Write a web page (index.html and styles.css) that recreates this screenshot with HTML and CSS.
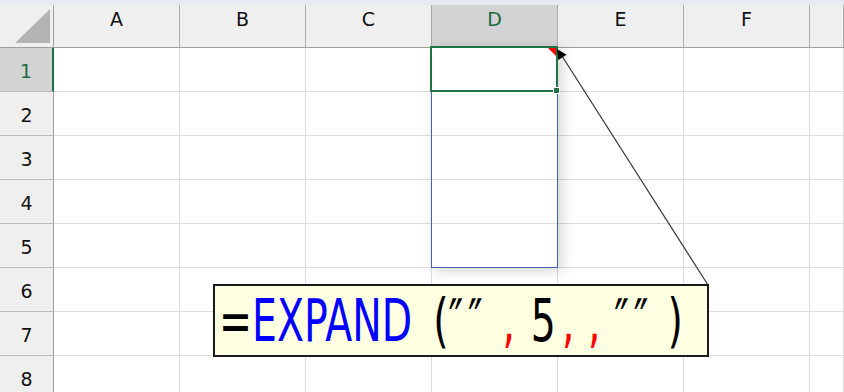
FILE: index.html
```html
<!DOCTYPE html>
<html lang="ja">
<head>
    <meta charset="UTF-8">
    <title>EXPAND</title>
    <link rel="stylesheet" href="styles.css">
</head>
<body>

<div class="page">
    <div class="topbar"></div>

    <div class="sheet">
        <!-- Kepala kolom -->
        <div class="row head">
            <div class="corner"><span class="corner-tri"></span></div>
            <div class="col-h">A</div>
            <div class="col-h">B</div>
            <div class="col-h">C</div>
            <div class="col-h sel">D</div>
            <div class="col-h">E</div>
            <div class="col-h">F</div>
            <div class="col-h"></div>
        </div>

        <div class="row">
            <div class="row-h sel">1</div>
            <div class="cell"></div><div class="cell"></div><div class="cell"></div><div class="cell"></div>
            <div class="cell"></div><div class="cell"></div><div class="cell"></div>
        </div>
        <div class="row">
            <div class="row-h">2</div>
            <div class="cell"></div><div class="cell"></div><div class="cell"></div><div class="cell"></div>
            <div class="cell"></div><div class="cell"></div><div class="cell"></div>
        </div>
        <div class="row">
            <div class="row-h">3</div>
            <div class="cell"></div><div class="cell"></div><div class="cell"></div><div class="cell"></div>
            <div class="cell"></div><div class="cell"></div><div class="cell"></div>
        </div>
        <div class="row">
            <div class="row-h">4</div>
            <div class="cell"></div><div class="cell"></div><div class="cell"></div><div class="cell"></div>
            <div class="cell"></div><div class="cell"></div><div class="cell"></div>
        </div>
        <div class="row">
            <div class="row-h">5</div>
            <div class="cell"></div><div class="cell"></div><div class="cell"></div><div class="cell"></div>
            <div class="cell"></div><div class="cell"></div><div class="cell"></div>
        </div>
        <div class="row">
            <div class="row-h">6</div>
            <div class="cell"></div><div class="cell"></div><div class="cell"></div><div class="cell"></div>
            <div class="cell"></div><div class="cell"></div><div class="cell"></div>
        </div>
        <div class="row">
            <div class="row-h">7</div>
            <div class="cell"></div><div class="cell"></div><div class="cell"></div><div class="cell"></div>
            <div class="cell"></div><div class="cell"></div><div class="cell"></div>
        </div>
        <div class="row">
            <div class="row-h">8</div>
            <div class="cell"></div><div class="cell"></div><div class="cell"></div><div class="cell"></div>
            <div class="cell"></div><div class="cell"></div><div class="cell"></div>
        </div>
    </div>

    <!-- Rentang spill D1:D5 dan sel aktif D1 -->
    <div class="spill"></div>
    <div class="active-cell"><span class="fill-handle"></span></div>
    <span class="comment-mark"></span>

    <!-- Garis penunjuk komentar -->
    <svg class="pointer" width="844" height="392" viewBox="0 0 844 392">
        <line x1="708" y1="285" x2="562" y2="56" stroke="#333" stroke-width="1.2"/>
        <polygon points="557,49 566.6,54.7 558.2,60.1" fill="#000"/>
    </svg>

    <div class="comment">
        <div class="formula">=<span class="fn">EXPAND</span><span class="g31">(</span><span class="q">″″</span><span class="sep g22">,</span><span class="g23">5</span><span class="sep g9">,</span><span class="sep g20">,</span><span class="q g20">″″</span><span class="g21">)</span></div>
    </div>
</div>

</body>
</html>
```

FILE: styles.css
```css
body {
    margin: 0;
    background-color: #fff;
    font-family: "DejaVu Sans", sans-serif;
    overflow: hidden;
}

.page {
    position: relative;
    width: 844px;
    height: 392px;
    overflow: hidden;
}

.topbar {
    height: 5px;
    background-color: #e7ebf0;
}

.row {
    display: grid;
    grid-template-columns: 54px repeat(6, 126px) 1fr;
    height: 44px;
}

.row > div {
    box-sizing: border-box;
}

/* Kepala kolom */
.head {
    height: 43px;
}

.corner,
.col-h {
    background-color: #efefef;
    border-right: 1px solid #ababab;
    border-bottom: 1px solid #9e9e9e;
}

.corner {
    position: relative;
    border-right-color: #a0a0a0;
}

.corner-tri {
    position: absolute;
    left: 15px;
    top: 4px;
    width: 0;
    height: 0;
    border-left: 35px solid transparent;
    border-bottom: 34px solid #b4b4b4;
}

.col-h {
    display: flex;
    justify-content: center;
    padding-top: 3px;
    font-size: 19px;
    color: #111;
}

.col-h.sel {
    background-color: #d3d3d3;
    color: #1d6b40;
}

/* Kepala baris */
.row-h {
    display: flex;
    justify-content: center;
    align-items: center;
    padding-top: 3px;
    background-color: #efefef;
    border-right: 1px solid #a0a0a0;
    border-bottom: 1px solid #b9b9b9;
    font-size: 19px;
    color: #111;
}

.row-h.sel {
    background-color: #d3d3d3;
    color: #1d6b40;
    border-right: 2px solid #217346;
}

.cell {
    border-right: 1px solid #dcdcdc;
    border-bottom: 1px solid #dcdcdc;
}

/* Rentang spill dan sel aktif */
.spill {
    position: absolute;
    left: 431px;
    top: 47px;
    width: 127px;
    height: 221px;
    box-sizing: border-box;
    border: 1px solid #3b63b0;
    box-shadow: 4px 3px 12px rgba(0, 0, 0, 0.17);
}

.active-cell {
    position: absolute;
    left: 430px;
    top: 46px;
    width: 128px;
    height: 46px;
    box-sizing: border-box;
    border: 2px solid #217346;
}

.fill-handle {
    position: absolute;
    right: -3px;
    bottom: -3px;
    width: 5px;
    height: 5px;
    background-color: #217346;
    outline: 1px solid #fff;
}

.comment-mark {
    position: absolute;
    left: 548px;
    top: 48px;
    width: 0;
    height: 0;
    border-left: 8px solid transparent;
    border-top: 8px solid #ff0000;
}

.pointer {
    position: absolute;
    left: 0;
    top: 0;
}

/* Kotak komentar */
.comment {
    position: absolute;
    left: 213px;
    top: 284px;
    width: 496px;
    height: 73px;
    box-sizing: border-box;
    background-color: #ffffe1;
    border: 2px solid #1a1a1a;
    padding: 6px 0 0 4px;
    overflow: hidden;
}

.formula {
    font-size: 58px;
    line-height: 58px;
    white-space: pre;
    color: #000;
    transform: scaleX(0.68);
    transform-origin: left center;
}

.fn {
    color: #0000ff;
}

.sep {
    color: #ff0000;
}

.q {
    letter-spacing: 7px;
}

/* jarak antar tanda (sebelum skala) */
.g9 { margin-left: 9px; }
.g20 { margin-left: 20px; }
.g21 { margin-left: 21px; }
.g22 { margin-left: 22px; }
.g23 { margin-left: 23px; }
.g31 { margin-left: 31px; }
```
